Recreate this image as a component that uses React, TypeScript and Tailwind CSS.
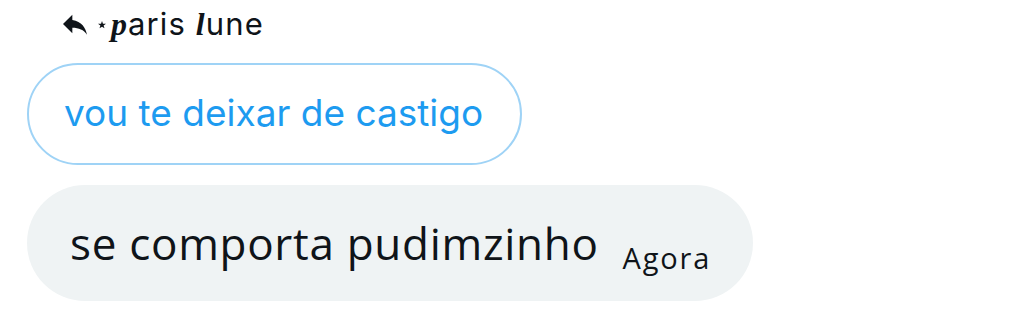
export default function App() {
  return (
    <div className="w-[1030px] h-[315px] bg-white flex flex-col items-start pl-[27px] pt-[8px] font-['Inter',sans-serif]">
      <div className="flex items-center ml-[36px] h-[30px] text-[#0f1419]">
        <svg width="24" height="22" viewBox="3 4 18 16" className="fill-[#0f1419] mt-[1px] shrink-0">
          <path d="M10 9V5l-7 7 7 7v-4.1c5 0 8.5 1.6 11 5.1-1-5-4-10-11-11z" />
        </svg>
        <svg width="8" height="8" viewBox="0 0 10 10" className="fill-[#0f1419] ml-[11px] mt-[4px] shrink-0">
          <path d="M5 0l1.2 3.4H10L7 5.6l1.1 3.6L5 7.1 1.9 9.2 3 5.6 0 3.4h3.8z" />
        </svg>
        <span className="ml-[5px] text-[31px] leading-none tracking-[1.1px] mt-[2px]">
          <span className="font-['Liberation_Serif',serif] font-bold italic text-[32px]">p</span>aris{" "}
          <span className="font-['Liberation_Serif',serif] font-bold italic text-[32px]">l</span>une
        </span>
      </div>
      <div className="mt-[25px] h-[102px] w-[495px] rounded-full border-2 border-[#9fd3f6] flex items-center pl-[35px] pb-[3px]">
        <span className="text-[#1d9bf0] text-[37px] leading-none">vou te deixar de castigo</span>
      </div>
      <div className="mt-[20px] h-[116px] w-[726px] rounded-full bg-[#eff3f4] flex items-center pl-[43px]">
        <span className="text-[#0f1419] text-[44px] leading-none font-['Open_Sans',sans-serif] tracking-[0.7px]">se comporta pudimzinho</span>
        <span className="text-[#0f1419] text-[29px] leading-none font-['Open_Sans',sans-serif] tracking-[1.8px] ml-[24px] mt-[28px]">Agora</span>
      </div>
    </div>
  );
}
